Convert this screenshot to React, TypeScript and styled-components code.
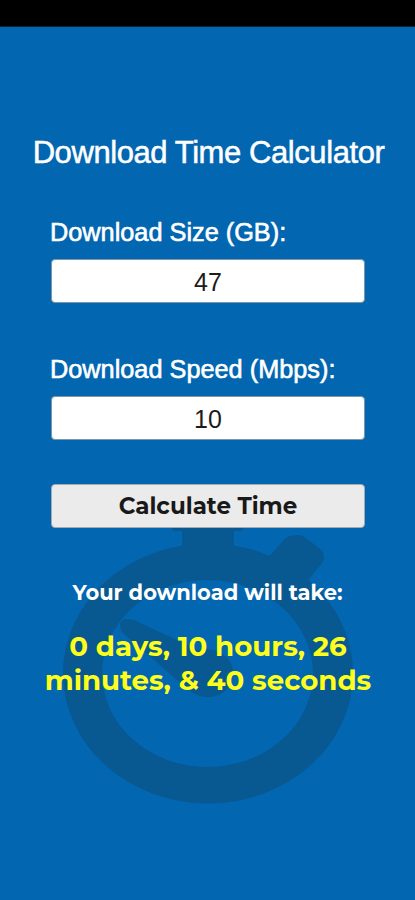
import React, { useState } from "react";
import styled, { createGlobalStyle } from "styled-components";

const GlobalStyle = createGlobalStyle`
  * { box-sizing: border-box; }
  html, body { margin: 0; padding: 0; background: #0366b0; }
`;

const Screen = styled.div`
  position: relative;
  isolation: isolate;
  display: flex;
  flex-direction: column;
  width: 415px;
  height: 900px;
  overflow: hidden;
  background: #0366b0;
  font-family: "Liberation Sans", Arial, sans-serif;
`;

const StatusBar = styled.div`
  flex: none;
  height: 27px;
  background: #000;
  border-bottom: 1px solid #02213a;
`;

const Watermark = styled.svg`
  position: absolute;
  inset: 0;
  z-index: -1;
`;

const Title = styled.h1`
  margin: 107px 0 0;
  padding-left: 2px;
  height: 38px;
  line-height: 38px;
  font-size: 31px;
  font-weight: 400;
  letter-spacing: -0.42px;
  text-align: center;
  white-space: nowrap;
  color: #fff;
  -webkit-text-stroke: 0.5px #fff;
`;

const Form = styled.form`
  display: flex;
  flex-direction: column;
  width: 314px;
  margin: 45px 0 0 51px;
`;

const Field = styled.label`
  display: flex;
  flex-direction: column;
  height: 137px;
`;

const Caption = styled.span`
  height: 30px;
  margin: 0 0 12px -1px;
  line-height: 30px;
  font-size: 25.3px;
  white-space: nowrap;
  color: #fff;
  -webkit-text-stroke: 0.6px #fff;
`;

const NumberInput = styled.input`
  width: 100%;
  height: 44px;
  padding: 2px 0 0;
  border: 1px solid #7d95a5;
  border-radius: 4px;
  outline: none;
  background: #fff;
  color: #1c1c1c;
  font: 25px "Liberation Sans", Arial, sans-serif;
  text-align: center;
`;

const Button = styled.button`
  height: 44px;
  margin-top: -7px;
  padding: 0 0 1px;
  border: 1px solid #a4aaae;
  border-radius: 4px;
  background: #ebebeb;
  color: #191919;
  font: 700 23px Montserrat, Inter, sans-serif;
`;

const Result = styled.section`
  display: flex;
  flex-direction: column;
  align-items: center;
  font-family: Montserrat, Inter, sans-serif;
  font-weight: 700;
  text-align: center;
`;

const Lead = styled.p`
  margin: 51px 0 0;
  line-height: 28px;
  font-size: 21px;
  color: #fff;
`;

const Duration = styled.p`
  width: 350px;
  margin: 23px 0 0 1px;
  line-height: 33.5px;
  font-size: 27.6px;
  color: #ffff1c;
`;

function Stopwatch() {
  return (
    <Watermark width="415" height="900" viewBox="0 0 415 900" fill="#085891" aria-hidden="true">
      <path
        fillRule="evenodd"
        d="M63 673.5a145 130 0 1 0 290 0a145 130 0 1 0 -290 0ZM102 673.5a105.5 93.5 0 1 0 211 0a105.5 93.5 0 1 0 -211 0Z"
      />
      <path d="M172 520H243V528Q243 531 239 531H234V553H182V531H176Q172 531 172 528Z" />
      <path d="M268 558L282 542Q287 535 297 535Q303 535 307 539L319 548Q327 555 322 563L309 579L292 581Z" />
      <path d="M120 625Q120 618 129 619Q132 619 136 621L198 650Q208 648 217 651Q233 658 233 673C233 687 222 697 208 697Q195 697 185 687L124 634Q120 630 120 625Z" />
    </Watermark>
  );
}

export default function App() {
  const [size, setSize] = useState("47");
  const [speed, setSpeed] = useState("10");
  return (
    <>
      <GlobalStyle />
      <Screen>
        <Stopwatch />
        <StatusBar />
        <Title>Download Time Calculator</Title>
        <Form onSubmit={(e) => e.preventDefault()}>
          <Field>
            <Caption>Download Size (GB):</Caption>
            <NumberInput value={size} onChange={(e) => setSize(e.target.value)} />
          </Field>
          <Field>
            <Caption>Download Speed (Mbps):</Caption>
            <NumberInput value={speed} onChange={(e) => setSpeed(e.target.value)} />
          </Field>
          <Button type="submit">Calculate Time</Button>
        </Form>
        <Result>
          <Lead>Your download will take:</Lead>
          <Duration>
            0 days, 10 hours, 26
            <br />
            minutes, &amp; 40 seconds
          </Duration>
        </Result>
      </Screen>
    </>
  );
}
